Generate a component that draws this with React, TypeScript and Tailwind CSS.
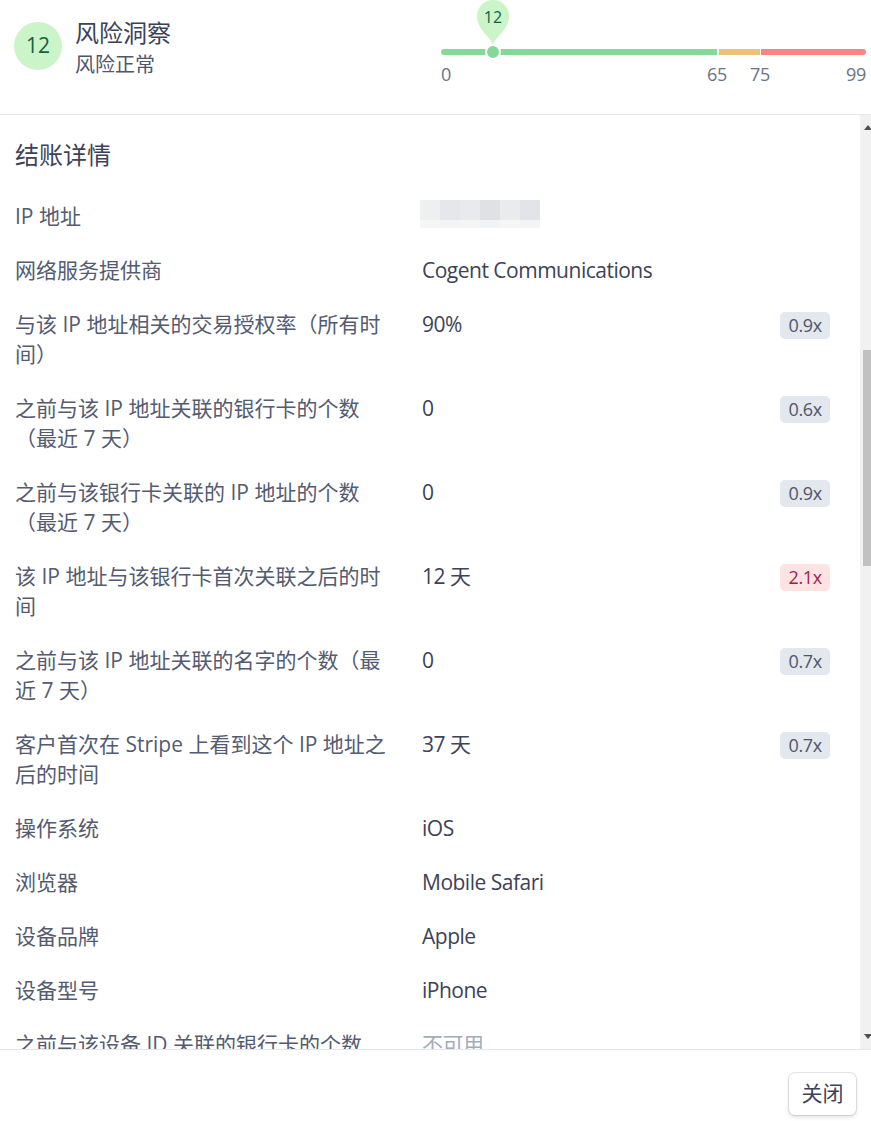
import React from "react";

const FONT = { fontFamily: '"Open Sans", "Noto Sans CJK SC", sans-serif' };

type Row = {
  label: string;
  value: string;
  badge?: string;
  red?: boolean;
  blur?: boolean;
  muted?: boolean;
};

const rows: Row[] = [
  { label: "IP 地址", value: "", blur: true },
  { label: "网络服务提供商", value: "Cogent Communications" },
  { label: "与该 IP 地址相关的交易授权率（所有时间）", value: "90%", badge: "0.9x" },
  { label: "之前与该 IP 地址关联的银行卡的个数（最近 7 天）", value: "0", badge: "0.6x" },
  { label: "之前与该银行卡关联的 IP 地址的个数（最近 7 天）", value: "0", badge: "0.9x" },
  { label: "该 IP 地址与该银行卡首次关联之后的时间", value: "12 天", badge: "2.1x", red: true },
  { label: "之前与该 IP 地址关联的名字的个数（最近 7 天）", value: "0", badge: "0.7x" },
  { label: "客户首次在 Stripe 上看到这个 IP 地址之后的时间", value: "37 天", badge: "0.7x" },
  { label: "操作系统", value: "iOS" },
  { label: "浏览器", value: "Mobile Safari" },
  { label: "设备品牌", value: "Apple" },
  { label: "设备型号", value: "iPhone" },
  { label: "之前与该设备 ID 关联的银行卡的个数", value: "不可用", muted: true },
];

function Blurred() {
  const top = ["#eeeff1", "#e6e7ea", "#e9eaed", "#e0e1e5", "#eaebed", "#e3e4e7"];
  const bottom = ["#f6f6f7", "#f3f4f5", "#f5f5f6", "#f2f3f4", "#f6f6f7", "#f3f4f5"];
  return (
    <div className="flex flex-col mt-[-1px] ml-[-2px]">
      <div className="flex">
        {top.map((c, i) => (
          <div key={i} className="w-[20px] h-[20px]" style={{ background: c }} />
        ))}
      </div>
      <div className="flex">
        {bottom.map((c, i) => (
          <div key={i} className="w-[20px] h-[8px]" style={{ background: c }} />
        ))}
      </div>
    </div>
  );
}

function Slider() {
  return (
    <div className="relative w-[425px] h-[114px] mr-[5px]">
      {/* pin */}
      <div className="absolute left-[35px] top-[-1px] w-[34px] h-[46px]">
        <svg width="34" height="46" viewBox="0 0 34 46" className="absolute inset-0">
          <path d="M17 46 C 15 38, 1 31, 1 17 A16 16 0 1 1 33 17 C 33 31, 19 38, 17 46 Z" fill="#cbf4c9" />
        </svg>
        <div className="relative w-full text-center text-[16px] leading-[20px] pt-[8px] text-[#0e6245]">12</div>
      </div>
      {/* track */}
      <div className="absolute left-0 top-[49px] w-full flex h-[6px]">
        <div className="w-[276px] h-full bg-[#85d996] rounded-l-full" />
        <div className="w-[2px]" />
        <div className="w-[41px] h-full bg-[#efc078]" />
        <div className="w-[1px]" />
        <div className="flex-1 h-full bg-[#fa8484] rounded-r-full" />
      </div>
      {/* knob */}
      <div className="absolute left-[44px] top-[44px] w-[16px] h-[16px] rounded-full bg-[#85d996] border-[2px] border-white" />
      {/* labels */}
      <div className="absolute left-0 top-[61px] w-full h-[26px] text-[18px] leading-[26px] text-[#697386] tracking-[-0.3px]">
        <span className="absolute left-0">0</span>
        <span className="absolute left-[266px]">65</span>
        <span className="absolute left-[309px]">75</span>
        <span className="absolute right-0">99</span>
      </div>
    </div>
  );
}

export default function App() {
  return (
    <div className="w-[871px] h-[1121px] bg-white flex flex-col overflow-hidden" style={FONT}>
      {/* header */}
      <div className="h-[115px] shrink-0 border-b border-[#e3e8ee] flex">
        <div className="flex pl-[14px]">
          <div className="mt-[22px] w-[48px] h-[48px] rounded-full bg-[#cbf4c9] flex items-center justify-center text-[21px] text-[#0e6245]">
            12
          </div>
          <div className="ml-[13px] pt-[16px] flex flex-col">
            <div className="text-[24px] leading-[33px] text-[#3c4257]">风险洞察</div>
            <div className="text-[20px] leading-[32px] text-[#4f566b]">风险正常</div>
          </div>
        </div>
        <div className="ml-auto">
          <Slider />
        </div>
      </div>

      {/* body */}
      <div className="flex-1 flex min-h-0">
        <div className="flex-1 overflow-hidden pl-[15px] pr-[30px] pt-[23px]">
          <div className="text-[24px] leading-[34px] text-[#3c4257]">结账详情</div>
          <div className="mt-[17px] flex flex-col">
            {rows.map((r, i) => (
              <div key={i} className="flex py-[12px] text-[21px] leading-[30px]">
                <div className="w-[380px] shrink-0 text-[#545b70]">{r.label}</div>
                <div
                  className={`ml-[27px] flex-1 tracking-[-0.5px] ${
                    r.muted ? "text-[#a3acb9]" : "text-[#3c4257]"
                  }`}
                >
                  {r.blur ? <Blurred /> : r.value}
                </div>
                {r.badge && (
                  <div
                    className={`mt-[3px] h-[27px] px-[8px] rounded-[5px] text-[18px] leading-[27px] tracking-[-0.3px] ${
                      r.red ? "bg-[#ffe2e2] text-[#a41c4e]" : "bg-[#e3e8ee] text-[#4f566b]"
                    }`}
                  >
                    {r.badge}
                  </div>
                )}
              </div>
            ))}
          </div>
        </div>
        {/* scrollbar */}
        <div className="w-[11px] shrink-0 bg-[#f1f1f1] flex flex-col items-center">
          <div className="mt-[10px] ml-[5px] w-0 h-0 border-l-[4px] border-r-[4px] border-b-[5px] border-l-transparent border-r-transparent border-b-[#505050]" />
          <div className="mt-[220px] ml-[2px] w-[8px] h-[216px] bg-[#c1c1c1]" />
          <div className="mt-auto mb-[10px] ml-[5px] w-0 h-0 border-l-[4px] border-r-[4px] border-t-[5px] border-l-transparent border-r-transparent border-t-[#505050]" />
        </div>
      </div>

      {/* footer */}
      <div className="h-[72px] shrink-0 border-t border-[#e3e8ee] flex justify-end items-start pt-[23px] pr-[15px]">
        <button className="h-[42px] w-[67px] rounded-[6px] bg-white text-[21px] text-[#3c4257] shadow-[0_0_0_1px_rgba(60,66,87,0.12),0_2px_4px_rgba(0,0,0,0.14)]">
          关闭
        </button>
      </div>
    </div>
  );
}
